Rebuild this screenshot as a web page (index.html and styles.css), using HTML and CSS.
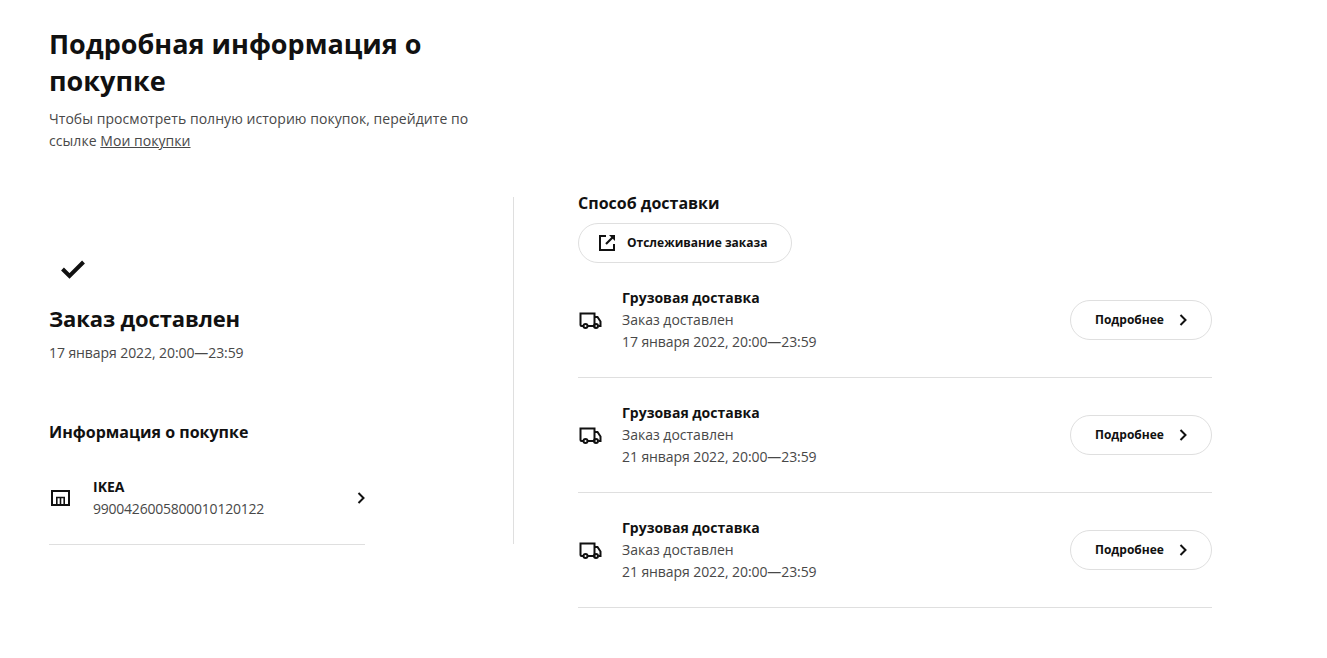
FILE: index.html
```html
<!DOCTYPE html>
<html lang="ru">
<head>
  <meta charset="UTF-8" />
  <title>Подробная информация о покупке</title>
  <link rel="stylesheet" href="styles.css">
</head>
<body>

<header class="page-head">
  <h1>Подробная информация о покупке</h1>
  <p>Чтобы просмотреть полную историю покупок, перейдите по ссылке <a href="#">Мои покупки</a></p>
</header>

<main class="columns">
  <section class="col-left">
    <svg class="status-icon" width="24" height="24" viewBox="0 0 24 24"><path d="M1.500 12l7 7 14-14" fill="none" stroke="#111" stroke-width="4"/></svg>
    <h2 class="status-title">Заказ доставлен</h2>
    <p class="muted date">17 января 2022, 20:00—23:59</p>

    <h3 class="section-title info-title">Информация о покупке</h3>
    <div class="store-row">
      <svg class="store-icon" width="24" height="24" viewBox="0 0 24 24"><path d="M3 5h17v14H3z" fill="none" stroke="#111" stroke-width="2"/><path d="M7.800 19v-7.500h7.400V19M11.500 11.500V19" fill="none" stroke="#111" stroke-width="1.600"/></svg>
      <div class="store-text">
        <strong>IKEA</strong>
        <span class="muted order-no">9900426005800010120122</span>
      </div>
      <svg class="chevron" width="16" height="16" viewBox="0 0 16 16"><path d="M5.500 3l5 5-5 5" fill="none" stroke="#111" stroke-width="2"/></svg>
    </div>
  </section>

  <section class="col-right">
    <h3 class="section-title">Способ доставки</h3>
    <a class="pill track-btn" href="#">
      <svg width="20" height="20" viewBox="0 0 20 20"><path d="M8 3H2V17H16V11" fill="none" stroke="#111" stroke-width="2"/><path d="M8 11l6.500-6.500" fill="none" stroke="#111" stroke-width="2.200"/><path d="M11 2h6v6z" fill="#111"/></svg>
      Отслеживание заказа
    </a>

    <div class="delivery-row">
      <svg class="truck" width="24" height="24" viewBox="0 0 24 24"><use href="#truck"/></svg>
      <div class="delivery-text">
        <strong>Грузовая доставка</strong>
        <span class="muted">Заказ доставлен</span>
        <span class="muted date">17 января 2022, 20:00—23:59</span>
      </div>
      <a class="pill more-btn" href="#">Подробнее
        <svg width="16" height="16" viewBox="0 0 16 16"><path d="M5.500 3l5 5-5 5" fill="none" stroke="#111" stroke-width="2"/></svg>
      </a>
    </div>

    <div class="delivery-row">
      <svg class="truck" width="24" height="24" viewBox="0 0 24 24"><use href="#truck"/></svg>
      <div class="delivery-text">
        <strong>Грузовая доставка</strong>
        <span class="muted">Заказ доставлен</span>
        <span class="muted date">21 января 2022, 20:00—23:59</span>
      </div>
      <a class="pill more-btn" href="#">Подробнее
        <svg width="16" height="16" viewBox="0 0 16 16"><path d="M5.500 3l5 5-5 5" fill="none" stroke="#111" stroke-width="2"/></svg>
      </a>
    </div>

    <div class="delivery-row">
      <svg class="truck" width="24" height="24" viewBox="0 0 24 24"><use href="#truck"/></svg>
      <div class="delivery-text">
        <strong>Грузовая доставка</strong>
        <span class="muted">Заказ доставлен</span>
        <span class="muted date">21 января 2022, 20:00—23:59</span>
      </div>
      <a class="pill more-btn" href="#">Подробнее
        <svg width="16" height="16" viewBox="0 0 16 16"><path d="M5.500 3l5 5-5 5" fill="none" stroke="#111" stroke-width="2"/></svg>
      </a>
    </div>
  </section>
</main>

<svg class="sprite" width="0" height="0">
  <symbol id="truck" viewBox="0 0 24 24">
    <path d="M5 18H3.500a1 1 0 0 1-1-1V5.500h14V18H10M16.500 9h3l3 4.500V18h-2M16.500 18h-.5" fill="none" stroke="#111" stroke-width="2"/>
    <circle cx="7.500" cy="18" r="2" fill="none" stroke="#111" stroke-width="2"/>
    <circle cx="18" cy="18" r="2" fill="none" stroke="#111" stroke-width="2"/>
  </symbol>
</svg>

</body>
</html>
```

FILE: styles.css
```css
* { box-sizing: border-box; margin: 0; padding: 0; }

body {
  font-family: 'Open Sans', sans-serif;
  font-size: 14px;
  line-height: 22px;
  color: #484848;
  background: #fff;
  padding: 25px 0 0 49px;
}

.page-head {
  width: 430px;
}

.page-head h1 {
  font-size: 27px;
  line-height: 37px;
  font-weight: 700;
  color: #111;
  margin-bottom: 9px;
}

.page-head p {
  letter-spacing: 0.05px;
}

.page-head a {
  color: #484848;
}

.columns {
  display: flex;
  margin-top: 39px;
}

.col-left {
  width: 465px;
  height: 347px;
  margin-top: 6px;
  padding-right: 148px;
  padding-top: 60px;
  border-right: 1px solid #dfdfdf;
}

.col-right {
  width: 634px;
  margin-left: 64px;
}

.muted {
  display: block;
  color: #484848;
}

.date {
  letter-spacing: -0.08px;
}

.order-no {
  letter-spacing: -0.23px;
}

.status-icon {
  display: block;
  margin-left: 12px;
}

.status-title {
  font-size: 22px;
  line-height: 29px;
  font-weight: 700;
  color: #111;
  letter-spacing: -0.13px;
  margin-top: 23px;
  margin-bottom: 9px;
}

.section-title {
  font-size: 16px;
  line-height: 24px;
  font-weight: 700;
  color: #111;
}

.info-title {
  margin-top: 56px;
}

.store-row {
  display: flex;
  align-items: center;
  margin-top: 32px;
  padding-bottom: 24px;
  border-bottom: 1px solid #dfdfdf;
}

.store-text {
  flex: 1;
  margin-left: 20px;
}

.store-text strong,
.delivery-text strong {
  display: block;
  font-size: 14px;
  font-weight: 700;
  color: #111;
}

.store-icon {
  flex-shrink: 0;
}

.chevron {
  margin-right: -4px;
}

.pill {
  display: inline-flex;
  align-items: center;
  height: 40px;
  border: 1px solid #dfdfdf;
  border-radius: 20px;
  font-size: 12px;
  font-weight: 700;
  color: #111;
  text-decoration: none;
}

.track-btn {
  width: 214px;
  margin-top: 8px;
  padding-left: 19px;
  gap: 9px;
}

.delivery-row {
  display: flex;
  align-items: center;
  height: 115px;
  border-bottom: 1px solid #dfdfdf;
}

.delivery-text {
  flex: 1;
  margin-left: 20px;
}

.truck {
  flex-shrink: 0;
}

.more-btn {
  width: 142px;
  padding-left: 24px;
  gap: 11px;
}

.sprite {
  position: absolute;
}
```
